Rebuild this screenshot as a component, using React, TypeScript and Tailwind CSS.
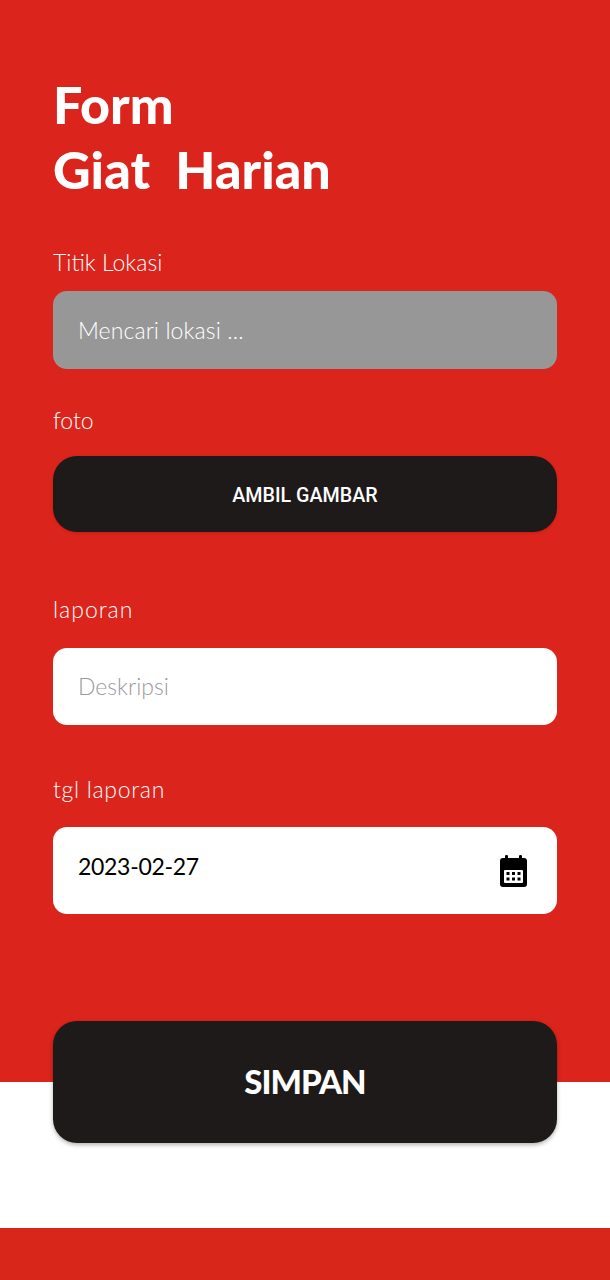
const fontClass = "font-['Lato','Liberation_Sans',sans-serif]";

function FieldLabel({ text, className }: { text: string; className: string }) {
  return <p className={`h-7 text-[23px] leading-7 font-light text-white ${className}`}>{text}</p>;
}

function CalendarIcon() {
  return (
    <svg width="27" height="32" viewBox="0 0 27 32" className="shrink-0">
      <rect x="5" y="0" width="3" height="7" rx="1.2" fill="#000" />
      <rect x="19" y="0" width="3" height="7" rx="1.2" fill="#000" />
      <path d="M3 3h21a3 3 0 0 1 3 3v23a3 3 0 0 1-3 3H3a3 3 0 0 1-3-3V6a3 3 0 0 1 3-3z" fill="#000" />
      <rect x="4" y="15" width="19" height="13" rx="1" fill="#fff" />
      {[6.5, 12, 17.5].map(x =>
        [17, 22.5].map(y => <rect key={`${x}-${y}`} x={x} y={y} width="3" height="3" fill="#000" />)
      )}
    </svg>
  );
}

export default function App() {
  return (
    <div className={`flex min-h-[1280px] w-full flex-col bg-white ${fontClass}`}>
      {/* red part of the page, the save button hangs over its edge */}
      <div className="bg-[#db241b] px-[53px] pt-[72px]">
        <h1 className="text-[52px] leading-[65px] font-black text-white [word-spacing:13px]">
          Form
          <br />
          Giat Harian
        </h1>

        <FieldLabel text="Titik Lokasi" className="mt-[46px]" />
        <div className="mt-[15px] flex h-[78px] items-center rounded-[14px] bg-[#979798] px-[25px] text-[23px] font-light tracking-[0.1px] text-white">
          Mencari lokasi ...
        </div>

        <FieldLabel text="foto" className="mt-[37px]" />
        <button className="mt-[22px] flex h-[76px] w-full items-center justify-center rounded-[24px] bg-[#1e1a19] pt-[3px] font-['Roboto',sans-serif] text-[19.7px] font-medium text-white shadow-sm">
          AMBIL GAMBAR
        </button>

        <FieldLabel text="laporan" className="mt-[63px] tracking-[1px]" />
        <div className="mt-[25px] flex h-[77px] items-center rounded-[14px] bg-white px-[25px] text-[23px] font-light text-[#9a9a9d]">
          Deskripsi
        </div>

        <FieldLabel text="tgl laporan" className="mt-[50px] tracking-[0.7px]" />
        <div className="mt-[24px] flex h-[87px] items-center justify-between rounded-[14px] bg-white pr-[30px] pl-[25px]">
          <span className="-mt-[8px] text-[23px] font-normal tracking-[-0.3px] text-black">2023-02-27</span>
          <CalendarIcon />
        </div>

        <button className="relative mt-[107px] -mb-[61px] flex h-[122px] w-full items-center justify-center rounded-[24px] bg-[#1e1a19] text-[33px] font-black tracking-[-1px] text-white shadow-[0_2px_4px_rgba(0,0,0,0.3)]">
          SIMPAN
        </button>
      </div>

      <div className="h-[146px] bg-white" />
      <div className="h-[52px] bg-[#d8261b]" />
    </div>
  );
}
